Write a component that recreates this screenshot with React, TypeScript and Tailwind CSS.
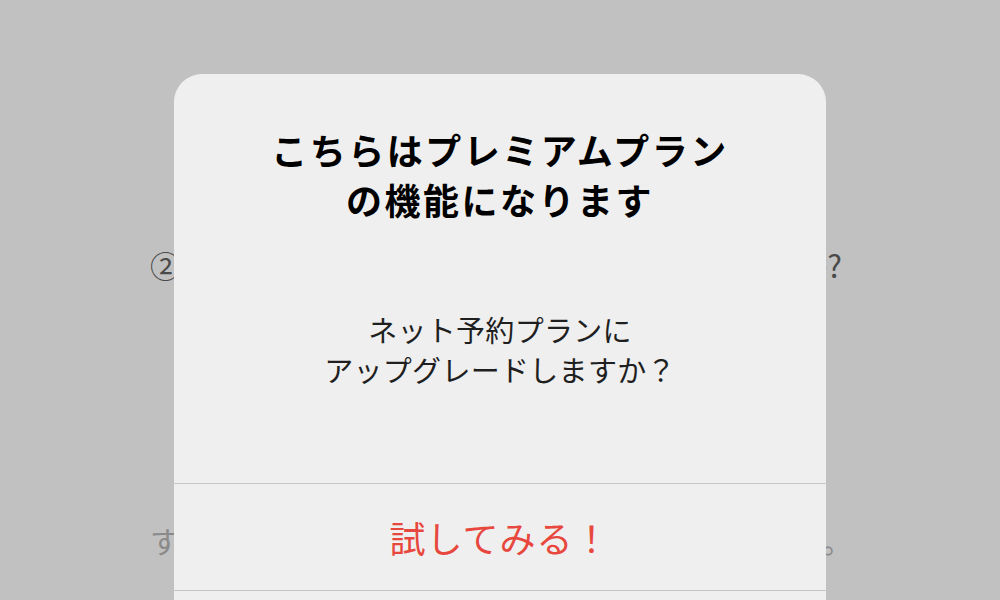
import React from "react";

export default function App() {
  const font = { fontFamily: '"Noto Sans CJK JP", "Noto Sans", sans-serif' };
  return (
    <div
      className="relative w-[1000px] h-[600px] overflow-hidden bg-[#c1c1c1]"
      style={font}
    >
      {/* background page content (dimmed) */}
      <div className="flex flex-col pt-[243px] pl-[150px]">
        <div className="text-[31px] leading-[44px] text-[#4a4a4a] whitespace-nowrap tracking-[-0.15px]">
          ②ネット予約の設定方法を教えていただけますか?
        </div>
        <div className="mt-[231px] text-[30px] leading-[44px] text-[#8a8a8a] whitespace-nowrap tracking-[-0.5px]">
          すべての機能を一定期間無料でお試しいただけます。
        </div>
      </div>

      {/* modal */}
      <div className="absolute left-[174px] top-[74px] w-[652px] rounded-[28px] bg-[#efefef] flex flex-col">
        <div className="pt-[50px] text-center text-[36px] leading-[50px] font-bold text-black tracking-[2.5px]">
          <div>こちらはプレミアムプラン</div>
          <div>の機能になります</div>
        </div>
        <div className="pt-[85px] pb-[94px] text-center text-[29px] leading-[40px] text-[#1f1f1f] tracking-[0.3px]">
          <div>ネット予約プランに</div>
          <div>アップグレードしますか？</div>
        </div>
        <div className="h-px bg-[#c6c6c6]" />
        <button className="h-[106px] flex items-center justify-center text-[36px] text-[#e8473d] tracking-[1px]">
          試してみる！
        </button>
        <div className="h-px bg-[#c6c6c6]" />
        <div className="h-[106px]" />
      </div>
    </div>
  );
}
